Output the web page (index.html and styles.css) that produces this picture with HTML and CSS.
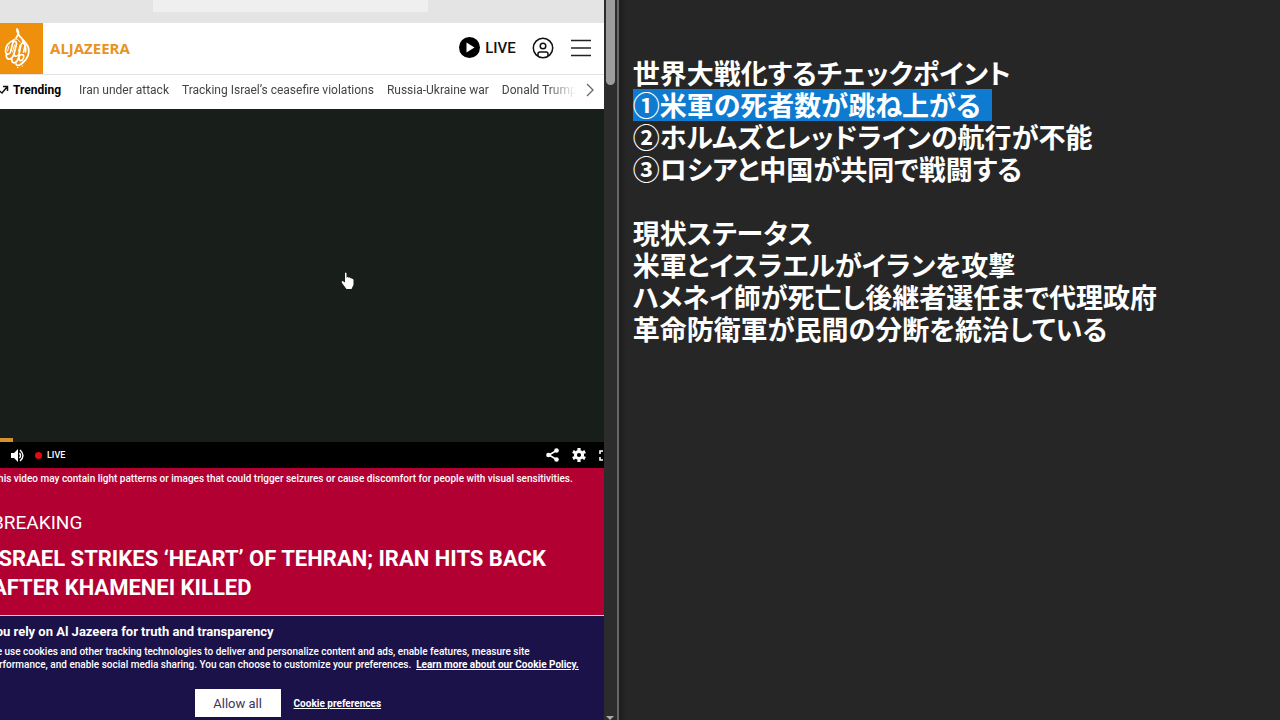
FILE: index.html
```html
<!DOCTYPE html>
<html lang="en">
<head>
  <meta charset="UTF-8">
  <title>Al Jazeera live and notes</title>
  <link rel="stylesheet" href="styles.css">
</head>
<body>

  <div class="browser">
    <div class="site">
      <div class="browser-bar"><div class="address"></div></div>

      <header>
        <a href="#" class="logo" aria-label="Al Jazeera home">
          <svg class="logo-mark" viewBox="0 0 51 51" fill="none" stroke="#fff" stroke-linecap="round" stroke-linejoin="round">
            <path stroke-width="1.800" d="M25 6c3 4 1 6-1 9M25 7c0 7 9 10 11.500 18 1.500 7-1.500 11-5.500 14.500-3 3-6 4-7 1.500"/>
            <path stroke-width="1.700" d="M22 17c-5 2-8.500 6-8.500 11 0 4 4 4 5 1l2-8c1-4 4-3 4 0l-2.500 10c0 3 4 3 5 0l2-9c1-3 4-2 4 1l-1.500 6"/>
            <path stroke-width="1.700" d="M14.500 31c-1 5 3 7 6 3l1.500-3M20 36c-1 4 3 5 5 2l3-6c3-1 4.500 0 3.500 3-1.500 4-4.500 3-4.500 0M30.500 18c2.500 3 4 6 3 11"/>
            <path stroke-width="1" d="M21 17c3-2 5-1 7 2M17 23l-1.500 5M22.500 22l-2 7M28 22l-1.500 6M25.500 44.500h.5M30 43h.5"/>
          </svg>
          <span class="logo-text">ALJAZEERA</span>
        </a>
        <nav class="actions">
          <a href="#" class="live-link">
            <svg width="21" height="21" viewBox="0 0 21 21"><circle cx="10.500" cy="10.500" r="10.500"/><path fill="#fff" d="M7.500 5.500v10l8-5z"/></svg>
            LIVE
          </a>
          <button aria-label="Account">
            <svg width="22" height="22" viewBox="0 0 22 22" fill="none" stroke="#111" stroke-width="1.500"><circle cx="11" cy="11" r="9.700"/><circle cx="11" cy="9" r="2.800"/><path d="M6 19v-2q0-2 2-2h6q2 0 2 2v2"/></svg>
          </button>
          <button aria-label="Menu">
            <svg width="22" height="18" viewBox="0 0 22 18" stroke="#222" stroke-width="1.500"><path d="M1 1.500h20M1 9h20M1 16.500h20"/></svg>
          </button>
        </nav>
      </header>

      <nav class="trending">
        <svg width="17" height="12" viewBox="0 0 17 12" fill="none" stroke="#111" stroke-width="1.500"><path d="M1 9l4-4 5 4 5-6M11 2.500h4.500V7"/></svg>
        <strong>Trending</strong>
        <div class="topics">
          <a href="#">Iran under attack</a>
          <a href="#">Tracking Israel’s ceasefire violations</a>
          <a href="#">Russia-Ukraine war</a>
          <a href="#">Donald Trump</a>
        </div>
        <button class="next" aria-label="More topics">
          <svg width="8" height="14" viewBox="0 0 8 14" fill="none" stroke="#666" stroke-width="1.300"><path d="M1 1l6 6-6 6"/></svg>
        </button>
      </nav>

      <div class="video">
        <div class="progress"></div>
        <svg class="cursor" width="14" height="18" viewBox="0 0 14 18"><path fill="#fff" d="M4 1q1-1 1.500 .5V6l.5-.8q1.200-.5 1.700.6.500-.8 1.600 0l.3.6q1-.6 1.500.3 1.400-.2 1.400 1.500v4.500L10.500 17h-5L1 11q-1-2 .7-2L4 10.500z"/></svg>
      </div>
      <div class="controls">
        <button aria-label="Mute">
          <svg width="13" height="13" viewBox="0 0 13 13"><path fill="#fff" d="M0 4h3l4-4v13L3 9H0z"/><path fill="none" stroke="#fff" stroke-width="1.400" d="M8.500 4q2 2.500 0 5M9 1q6 5.500 0 11"/></svg>
        </button>
        <span class="dot"></span>
        <span>LIVE</span>
        <div class="right-controls">
          <button aria-label="Share">
            <svg width="13" height="14" viewBox="0 0 13 14" fill="#fff"><path fill="none" stroke="#fff" stroke-width="1.600" d="M10.500 2.500L3 7l7.500 4.500"/><circle cx="10.500" cy="2.500" r="2.300"/><circle cx="2.500" cy="7" r="2.300"/><circle cx="10.500" cy="11.500" r="2.300"/></svg>
          </button>
          <button aria-label="Settings">
            <svg width="14" height="14" viewBox="0 0 14 14" fill="none" stroke="#fff"><circle cx="7" cy="7" r="3.600" stroke-width="3"/><path stroke-width="3.200" d="M7 0v2.500M7 11.500V14M.9 3.500l2.200 1.200M10.900 9.300l2.200 1.200M.9 10.500l2.200-1.200M10.900 4.700l2.200-1.200"/></svg>
          </button>
          <button aria-label="Full screen">
            <svg width="11" height="11" viewBox="0 0 11 11" fill="none" stroke="#fff" stroke-width="1.600"><path d="M1 4V1h3M7 1h3v3M10 7v3H7M4 10H1V7"/></svg>
          </button>
        </div>
      </div>

      <main class="breaking">
        <p class="warning">This video may contain light patterns or images that could trigger seizures or cause discomfort for people with visual sensitivities.</p>
        <h2>BREAKING</h2>
        <h1>ISRAEL STRIKES ‘HEART’ OF TEHRAN; IRAN HITS BACK<br>AFTER KHAMENEI KILLED</h1>
      </main>

      <section class="cookies">
        <h3>You rely on Al Jazeera for truth and transparency</h3>
        <p>We use cookies and other tracking technologies to deliver and personalize content and ads, enable features, measure site<br>performance, and enable social media sharing. You can choose to customize your preferences.&nbsp; <a href="#">Learn more about our Cookie Policy.</a></p>
        <div class="choices">
          <button class="allow">Allow all</button>
          <a href="#">Cookie preferences</a>
        </div>
      </section>
    </div>

    <div class="scrollbar">
      <div class="thumb"></div>
      <div class="arrow"></div>
    </div>
  </div>

  <div class="notes" lang="ja">
    <p>世界大戦化するチェックポイント</p>
    <p><mark>①米軍の死者数が跳ね上がる</mark></p>
    <p>②ホルムズとレッドラインの航行が不能</p>
    <p>③ロシアと中国が共同で戦闘する</p>
    <br>
    <p>現状ステータス</p>
    <p>米軍とイスラエルがイランを攻撃</p>
    <p>ハメネイ師が死亡し後継者選任まで代理政府</p>
    <p>革命防衛軍が民間の分断を統治している</p>
  </div>

</body>
</html>
```
FILE: styles.css
```css
* {
  box-sizing: border-box;
}

body {
  margin: 0;
  height: 100vh;
  overflow: hidden;
  display: grid;
  grid-template-columns: 29fr 31fr;
  font-family: Roboto, Arial, sans-serif;
  background-color: #262626;
}

h1, h2, h3, p {
  margin: 0;
}

button {
  background-color: transparent;
  border: none;
  padding: 0;
  font-family: inherit;
  cursor: pointer;
}

svg {
  display: block;
  flex-shrink: 0;
}

a {
  color: inherit;
  text-decoration: none;
}

/* Browser window, scrolled slightly to the right */
.browser {
  display: flex;
  height: 100vh;
  min-width: 0;
  overflow: hidden;
  border-right: 2px solid #666;
}

.site {
  flex: 1;
  min-width: 0;
  margin-left: -8px;
  display: flex;
  flex-direction: column;
  white-space: nowrap;
  overflow: hidden;
}

.browser-bar {
  height: 23px;
  padding-left: 161px;
  background-color: #e4e4e4;
}

.address {
  width: 275px;
  height: 12px;
  background-color: #efefef;
}

header {
  height: 51px;
  display: flex;
  justify-content: space-between;
  align-items: center;
  background-color: white;
}

.logo {
  display: flex;
  align-items: center;
  gap: 7px;
}

.logo-mark {
  width: 51px;
  height: 51px;
  background-color: #ee900c;
}

.logo-text {
  padding-bottom: 2px;
  font-family: "Noto Sans", sans-serif;
  font-size: 15px;
  font-weight: bold;
  color: #e8931f;
}

.actions {
  display: flex;
  align-items: center;
  gap: 16px;
  padding: 0 12px 2px 0;
}

.live-link {
  display: flex;
  align-items: center;
  gap: 5px;
  font-size: 15px;
  font-weight: 500;
  color: #111;
}

.trending {
  height: 35px;
  display: flex;
  align-items: center;
  padding-bottom: 4px;
  border-top: 1px solid #e3e3e3;
  background-color: white;
  font-size: 12px;
  color: #444;
}

.trending strong {
  margin-left: 4px;
  color: black;
}

.topics {
  flex: 1;
  display: flex;
  gap: 13px;
  margin-left: 18px;
  overflow: hidden;
  mask-image: linear-gradient(to right, black 94%, transparent);
}

.next {
  padding: 0 10px;
}

.video {
  flex: 1;
  position: relative;
  display: flex;
  align-items: flex-end;
  background-color: #181e1a;
}

.progress {
  width: 21px;
  height: 4px;
  background-color: #d4922e;
}

.cursor {
  position: absolute;
  left: 57%;
  top: 49%;
}

.controls {
  height: 26px;
  display: flex;
  align-items: center;
  padding-left: 19px;
  background-color: black;
  color: white;
  font-size: 9px;
  font-weight: 500;
}

.dot {
  width: 7px;
  height: 7px;
  margin: 0 5px 0 11px;
  border-radius: 50%;
  background-color: #e00b10;
}

.right-controls {
  display: flex;
  align-items: center;
  gap: 13px;
  margin-left: auto;
  margin-right: -6px;
}

.breaking {
  height: 148px;
  padding-top: 4px;
  border-bottom: 1px solid #e5c6d8;
  background-color: #b20033;
  color: white;
}

.warning {
  font-size: 10px;
  font-weight: 500;
  line-height: 13px;
}

.breaking h2 {
  margin-top: 26px;
  font-size: 19px;
  font-weight: normal;
  line-height: 24px;
}

.breaking h1 {
  margin-top: 9px;
  font-size: 22px;
  line-height: 29px;
}

.cookies {
  height: 104px;
  padding-top: 8px;
  background-color: #1c124a;
  color: white;
}

.cookies h3 {
  margin-left: -4px;
  font-size: 13px;
  line-height: 16px;
}

.cookies p {
  margin-top: 5px;
  margin-left: -4px;
  font-size: 10px;
  font-weight: 500;
  line-height: 13px;
}

.cookies a {
  font-weight: bold;
  text-decoration: underline;
}

.choices {
  display: flex;
  justify-content: center;
  align-items: center;
  gap: 13px;
  margin-top: 18px;
  padding-right: 20px;
  font-size: 10px;
}

.allow {
  width: 86px;
  height: 28px;
  background-color: white;
  color: #3b3560;
  font-size: 13px;
}

.scrollbar {
  width: 13px;
  display: flex;
  flex-direction: column;
  justify-content: space-between;
  align-items: center;
  background-color: #2c2c2c;
}

.thumb {
  width: 9px;
  height: 85px;
  border-radius: 0 0 5px 5px;
  background-color: #9c9c9c;
}

.arrow {
  border: 4px solid transparent;
  border-top-color: #aaa;
  border-bottom: none;
}

/* Notes */
.notes {
  padding: 57px 0 0 14px;
  font-family: "Noto Sans CJK JP", sans-serif;
  font-size: 27px;
  font-weight: bold;
  font-feature-settings: "palt";
  line-height: 32px;
  color: white;
  white-space: nowrap;
  background: linear-gradient(to right, #1e1e1e, #262626 8px);
}

.notes mark {
  display: inline-block;
  padding-right: 11px;
  background-color: #0f7bd0;
  color: white;
}
```
